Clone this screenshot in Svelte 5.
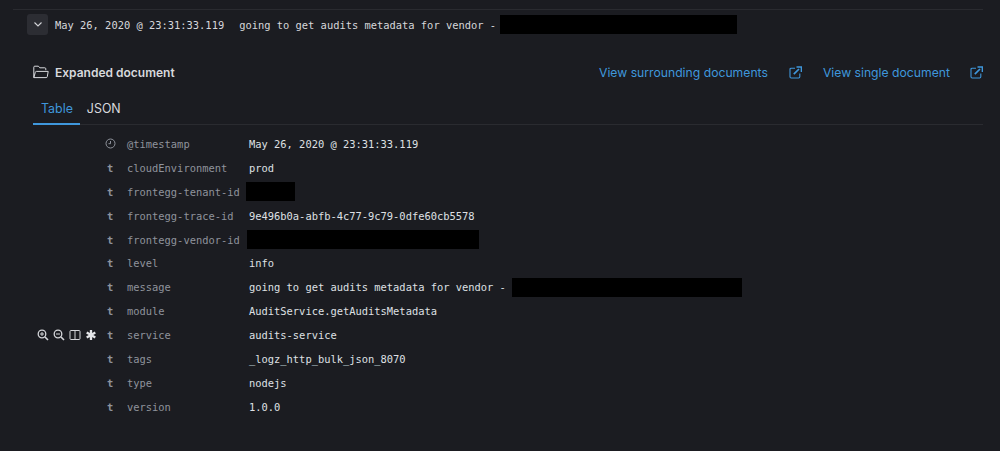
<script lang="ts">
  const rows = [
    { type: "clock", name: "@timestamp", value: "May 26, 2020 @ 23:31:33.119" },
    { type: "t", name: "cloudEnvironment", value: "prod" },
    { type: "t", name: "frontegg-tenant-id", value: "", block: 49, shift: -3 },
    { type: "t", name: "frontegg-trace-id", value: "9e496b0a-abfb-4c77-9c79-0dfe60cb5578" },
    { type: "t", name: "frontegg-vendor-id", value: "", block: 232, shift: -2 },
    { type: "t", name: "level", value: "info" },
    { type: "t", name: "message", value: "going to get audits metadata for vendor - ", block: 230, shift: 0 },
    { type: "t", name: "module", value: "AuditService.getAuditsMetadata" },
    { type: "t", name: "service", value: "audits-service", actions: true },
    { type: "t", name: "tags", value: "_logz_http_bulk_json_8070" },
    { type: "t", name: "type", value: "nodejs" },
    { type: "t", name: "version", value: "1.0.0" }
  ]
</script>

<div class="page">
  <div class="row-head">
    <button class="toggle" aria-label="collapse">
      <svg width="12" height="12" viewBox="0 0 12 12"><path d="M2.5 4.5 6 8l3.5-3.5" fill="none" stroke="#d4d5d9" stroke-width="1.1" /></svg>
    </button>
    <span class="mono time">May 26, 2020 @ 23:31:33.119</span>
    <span class="mono msg">going to get audits metadata for vendor -</span>
    <span class="redact head-redact"></span>
  </div>

  <div class="doc-head">
    <div class="doc-title">
      <svg width="16" height="14" viewBox="0 0 16 14">
        <path d="M.8 12.6V2.2q0-1 1-1h3.6l1.4 1.6h5q1 0 1 1v1.4M.8 12.6h12.4q1 0 1.1-1l.9-5.2H3.400q-.9 0-1.100 1z" fill="none" stroke="#d8d9dd" stroke-width="1" />
      </svg>
      <strong>Expanded document</strong>
    </div>
    <div class="links">
      <a href="#s" class="wide">View surrounding documents</a>
      <svg width="13" height="13" viewBox="0 0 13 13"><path d="M6 2.200H2.200q-1.200 0-1.200 1.200v7.400q0 1.200 1.200 1.200h7.400q1.200 0 1.200-1.200V7.500" fill="none" stroke="#3f97dc" stroke-width="1.100" /><path d="M4.800 8.200 10 3M7.500 1h5v5" fill="none" stroke="#3f97dc" stroke-width="1.700" /></svg>
      <a href="#d" class="narrow">View single document</a>
      <svg width="13" height="13" viewBox="0 0 13 13"><path d="M6 2.200H2.200q-1.200 0-1.200 1.200v7.400q0 1.200 1.200 1.200h7.400q1.200 0 1.200-1.200V7.500" fill="none" stroke="#3f97dc" stroke-width="1.100" /><path d="M4.800 8.200 10 3M7.500 1h5v5" fill="none" stroke="#3f97dc" stroke-width="1.700" /></svg>
    </div>
  </div>

  <div class="tabs">
    <span class="tab active">Table</span>
    <span class="tab">JSON</span>
  </div>

  <div class="fields">
    {#each rows as r}
      <div class="field">
        <div class="actions">
          {#if r.actions}
            <svg width="12" height="12" viewBox="0 0 12 12"><circle cx="5" cy="5" r="3.800" fill="none" stroke="#d4d5d9" stroke-width="1.300" /><path d="m8 8 3 3" stroke="#d4d5d9" stroke-width="1.600" /><path d="M3 5h4M5 3v4" stroke="#d4d5d9" /></svg>
            <svg width="12" height="12" viewBox="0 0 12 12"><circle cx="5" cy="5" r="3.800" fill="none" stroke="#d4d5d9" stroke-width="1.300" /><path d="m8 8 3 3" stroke="#d4d5d9" stroke-width="1.600" /><path d="M3 5h4" stroke="#d4d5d9" /></svg>
            <svg width="12" height="12" viewBox="0 0 12 12"><rect x="1" y="1.500" width="10" height="9" rx="1" fill="none" stroke="#d4d5d9" /><path d="M6 1.500v9" stroke="#d4d5d9" /></svg>
            <svg width="12" height="12" viewBox="0 0 12 12"><path d="M6 1v10M1.700 3.500l8.600 5M10.300 3.500l-8.600 5" stroke="#e4e5e8" stroke-width="2.300" /></svg>
          {/if}
        </div>
        <div class="type">
          {#if r.type === "clock"}
            <svg class="clock" width="11" height="11" viewBox="0 0 11 11"><circle cx="5.500" cy="5.500" r="4.500" fill="none" stroke="#8f939c" /><path d="M5.500 3v2.700H3.500" fill="none" stroke="#8f939c" /></svg>
          {:else}
            t
          {/if}
        </div>
        <div class="name">{r.name}</div>
        <div class="value" style:margin-left={r.shift ? `${r.shift}px` : null}>
          {r.value}{#if r.block}<span class="redact" style:width={`${r.block}px`}></span>{/if}
        </div>
      </div>
    {/each}
  </div>
</div>

<style>
  :global(body) {
    background: #1b1c21;
  }
  .page {
    height: 451px;
    box-sizing: border-box;
    overflow: hidden;
    background: #1b1c21;
    color: #dfe0e4;
    font-family: Inter, "Noto Sans", sans-serif;
    padding: 9px 17px 0 13px;
  }
  .mono {
    font-family: "DejaVu Sans Mono", monospace;
    font-size: 10.42px;
  }
  .row-head {
    display: flex;
    align-items: center;
    height: 30px;
    border-top: 1px solid #2a2b30;
    padding-left: 14px;
  }
  .toggle {
    width: 21px;
    height: 21px;
    border: 0;
    padding: 0;
    border-radius: 3px;
    background: #2c2d33;
    display: flex;
    align-items: center;
    justify-content: center;
    margin-right: 7px;
    margin-top: -2px;
  }
  .time,
  .msg {
    color: #d6d7db;
  }
  .msg {
    margin-left: 15px;
  }
  .redact {
    display: inline-block;
    height: 19px;
    background: #000;
    vertical-align: middle;
  }
  .head-redact {
    width: 237px;
    margin-left: 4px;
    margin-top: -2px;
  }
  .doc-head {
    display: flex;
    align-items: center;
    justify-content: space-between;
    margin-top: 17px;
    padding-left: 20px;
    height: 30px;
  }
  .doc-title {
    display: flex;
    align-items: center;
    gap: 6px;
    font-size: 12px;
    color: #d8d9dd;
  }
  .doc-title strong {
    font-weight: 600;
  }
  .links {
    display: flex;
    align-items: center;
    font-size: 12.2px;
  }
  .links a {
    color: #3f97dc;
    text-decoration: none;
  }
  .wide {
    margin-right: 21px;
  }
  .narrow {
    margin-left: 21px;
    margin-right: 20px;
  }
  .tabs {
    display: flex;
    margin-left: 20px;
    margin-top: 6px;
    height: 31px;
    border-bottom: 1px solid #2a2b30;
    font-size: 12.4px;
  }
  .tab {
    padding: 0 7px;
    line-height: 31px;
    margin-bottom: -1px;
    color: #d8d9dd;
  }
  .tab.active {
    padding-left: 8px;
    color: #3f97dc;
    border-bottom: 2px solid #3f97dc;
  }
  .fields {
    margin-top: 7px;
  }
  .field {
    display: grid;
    grid-template-columns: 94px 20px 122px 1fr;
    align-items: center;
    height: 23.9px;
    font-family: "DejaVu Sans Mono", monospace;
    font-size: 10.42px;
  }
  .actions {
    display: flex;
    gap: 4px;
    padding-left: 24px;
  }
  .type {
    color: #8f939c;
    font-weight: 700;
    display: flex;
  }
  .clock {
    margin-left: -2px;
  }
  .name {
    color: #8f939c;
    white-space: nowrap;
  }
  .value {
    color: #dfe0e4;
    white-space: pre;
    display: flex;
    align-items: center;
  }
</style>
